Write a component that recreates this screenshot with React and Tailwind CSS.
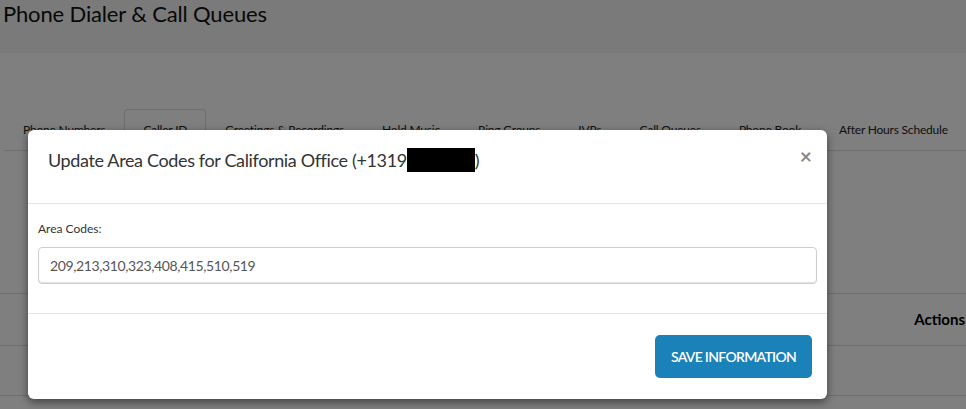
import React from "react";

const tabs = [
  "Phone Numbers",
  "Caller ID",
  "Greetings & Recordings",
  "Hold Music",
  "Ring Groups",
  "IVRs",
  "Call Queues",
  "Phone Book",
  "After Hours Schedule",
];

export default function App() {
  return (
    <div
      className="relative h-[409px] w-[966px] overflow-hidden bg-white text-[#222]"
      style={{ fontFamily: "Lato, 'Noto Sans', sans-serif" }}
    >
      {/* page header */}
      <div className="h-[53px] bg-[#f4f4f4] pl-[3px]">
        <h1 className="text-[22px] leading-[28px] tracking-[-0.15px] text-[#111]">Phone Dialer &amp; Call Queues</h1>
      </div>

      {/* tabs */}
      <div className="mt-[56px] w-[990px]">
        <ul className="ml-[4px] flex border-b border-[#ddd] text-[12px] tracking-[-0.2px] text-[#222]">
          {tabs.map((t, i) => (
            <li
              key={t}
              className={
                "-mb-px whitespace-nowrap rounded-t-[4px] border px-[18px] py-[10px] leading-[20px] " +
                (i === 1 ? "border-[#ddd] border-b-white bg-white" : "border-transparent")
              }
            >
              {t}
            </li>
          ))}
        </ul>
      </div>

      {/* table behind */}
      <div className="mt-[142px] w-[966px] border-y border-[#ddd]">
        <div className="flex h-[51px] items-center justify-end pr-[1px]">
          <span className="text-[15px] font-bold text-black">Actions</span>
        </div>
      </div>
      <div className="h-[50px] border-b border-[#ddd]"></div>

      {/* modal overlay */}
      <div className="absolute inset-0 bg-black/50">
        <div className="ml-[28px] mt-[130px] w-[799px] overflow-hidden rounded-[6px] bg-white shadow-[0_3px_9px_rgba(0,0,0,0.5)]">
          <div className="flex h-[74px] items-start justify-between border-b border-[#e5e5e5] pl-[20px] pr-[15px] pt-[18px]">
            <h4 className="flex items-center text-[18px] leading-[24px] tracking-[-0.36px] text-[#333]">
              Update Area Codes for California Office (+1319
              <span className="inline-block h-[24px] w-[68px] bg-black"></span>)
            </h4>
            <button className="mt-[-4px] text-[21px] font-bold leading-[24px] text-[#8a8a8a]">×</button>
          </div>

          <div className="h-[110px] border-b border-[#e5e5e5] px-[10px] pt-[17px]">
            <label className="block text-[12px] leading-[16px] text-[#333]">Area Codes:</label>
            <input
              readOnly
              value="209,213,310,323,408,415,510,519"
              className="mt-[10px] h-[37px] w-full rounded-[4px] border border-[#ccc] px-[11px] text-[14px] tracking-[-0.38px] text-[#555] shadow-[inset_0_-1px_1px_rgba(0,0,0,0.12)] outline-none"
            />
          </div>

          <div className="flex h-[85px] justify-end pr-[15px] pt-[21px]">
            <button className="h-[43px] w-[157px] rounded-[5px] bg-[#1a82b8] text-[14px] font-semibold tracking-[-0.7px] text-white">
              SAVE INFORMATION
            </button>
          </div>
        </div>
      </div>
    </div>
  );
}
